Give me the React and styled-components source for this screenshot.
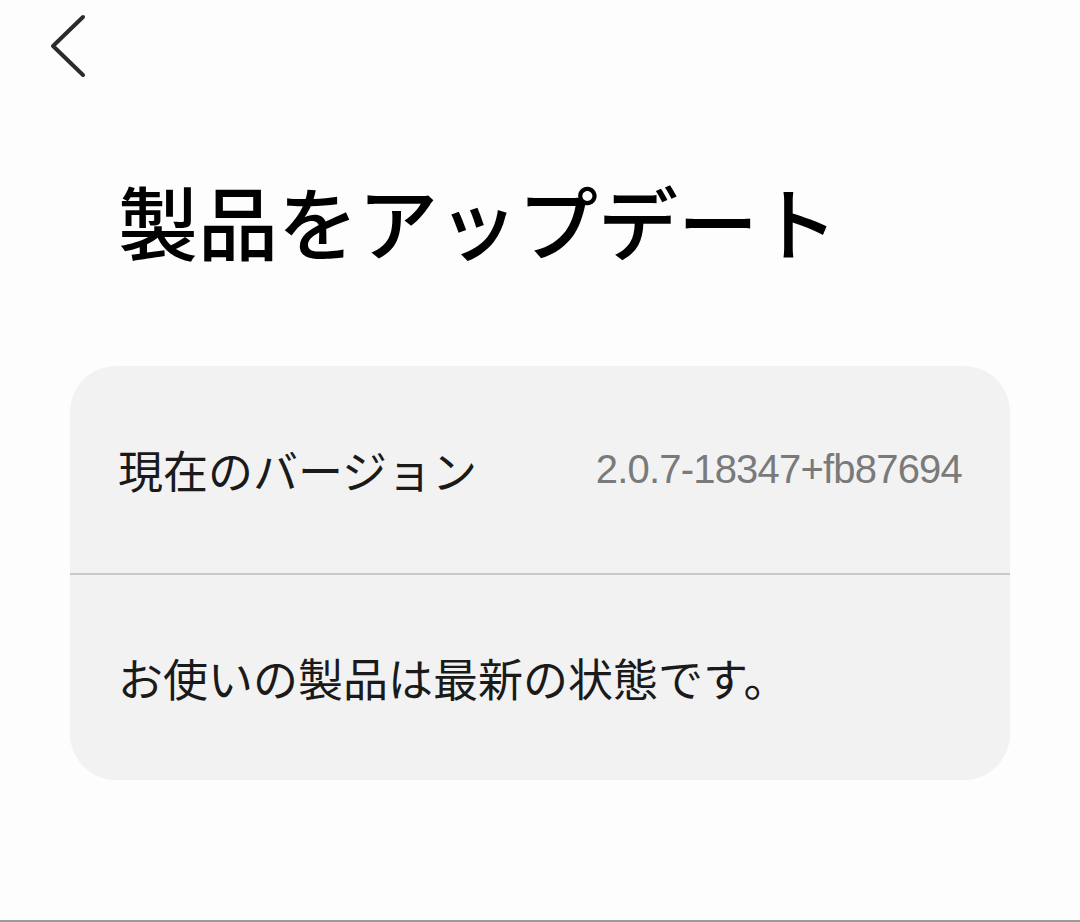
import React from 'react';
import styled, { createGlobalStyle } from 'styled-components';

const GlobalStyle = createGlobalStyle`
  html, body {
    margin: 0;
    padding: 0;
    background: #fdfdfd;
  }
  body {
    font-family: "Noto Sans CJK JP", "Noto Sans", sans-serif;
    color: #111;
  }
`;

const Page = styled.div`
  height: 922px;
  box-sizing: border-box;
  border-bottom: 2px solid #9a9a9a;
  display: flex;
  flex-direction: column;
`;

const Header = styled.div`
  height: 90px;
  padding: 14px 0 0 48px;
  box-sizing: border-box;
`;

const BackButton = styled.button`
  border: none;
  background: none;
  padding: 0;
  width: 40px;
  height: 66px;
  cursor: pointer;
  svg { display: block; }
`;

const Title = styled.h1`
  margin: 81px 0 0 118px;
  font-size: 80px;
  line-height: 96px;
  font-weight: 500;
  color: #000;
`;

const Card = styled.div`
  margin: 99px 70px 0;
  background: #f2f2f2;
  border-radius: 46px;
  overflow: hidden;
`;

const Row = styled.div`
  height: 207px;
  padding: 0 48px;
  display: flex;
  align-items: center;
  justify-content: space-between;
  border-top: ${(p) => (p.divided ? '2px solid #c9c9c9' : 'none')};
  box-sizing: border-box;
`;

const Label = styled.span`
  font-size: 45px;
  font-weight: 400;
  color: #1a1a1a;
`;

const Value = styled.span`
  font-family: "Liberation Sans", "Noto Sans", sans-serif;
  font-size: 40px;
  letter-spacing: -0.8px;
  color: #7a7a7a;
`;

const App = () => (
  <Page>
    <GlobalStyle />
    <Header>
      <BackButton type="button" aria-label="戻る">
        <svg width="40" height="66" viewBox="0 0 40 66">
          <polyline
            points="35,3 5,32 35,61"
            fill="none"
            stroke="#2b2b2b"
            strokeWidth="4"
            strokeLinecap="round"
            strokeLinejoin="round"
          />
        </svg>
      </BackButton>
    </Header>
    <Title>製品をアップデート</Title>
    <Card>
      <Row>
        <Label>現在のバージョン</Label>
        <Value>2.0.7-18347+fb87694</Value>
      </Row>
      <Row divided>
        <Label>お使いの製品は最新の状態です。</Label>
      </Row>
    </Card>
  </Page>
);

export default App;
